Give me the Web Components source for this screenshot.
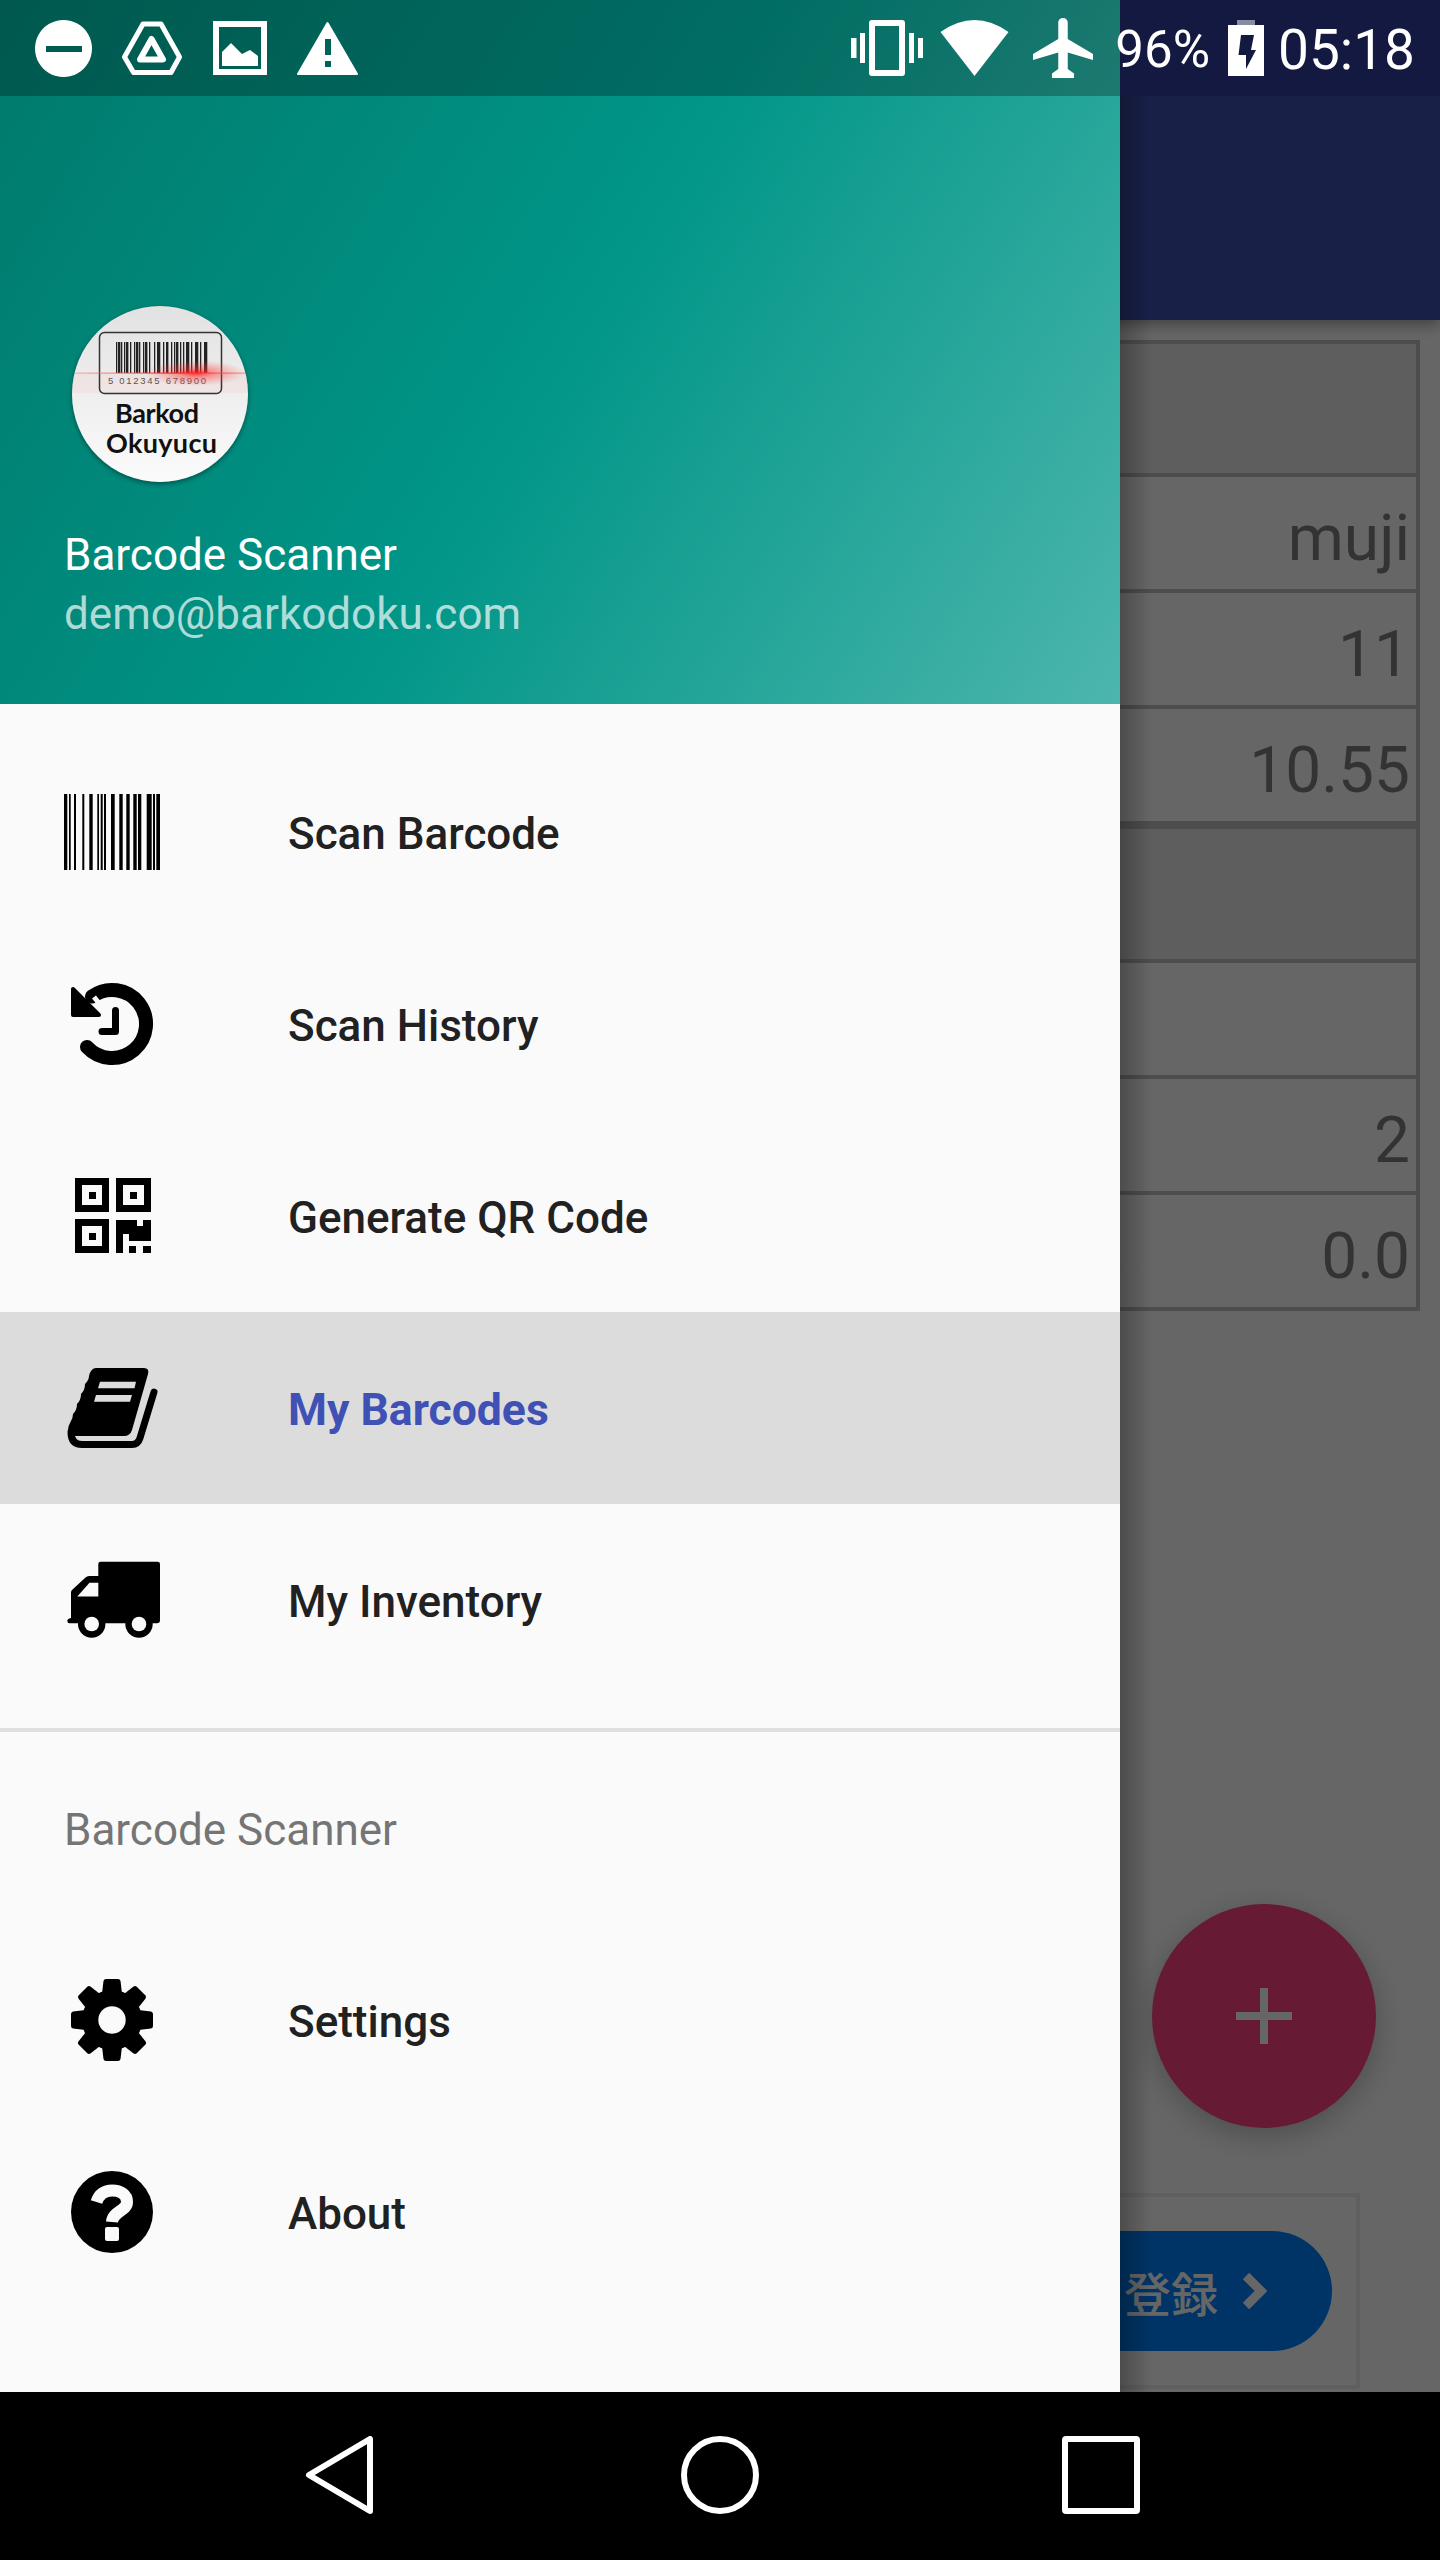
<!DOCTYPE html>
<html>
<head>
<meta charset="utf-8">
<title>Barcode Scanner</title>
<style>
  html, body { margin: 0; background: #000; }
  body { font-family: Roboto, "Noto Sans CJK JP", sans-serif; }
</style>
</head>
<body>
<phone-screen>
  <behind-app></behind-app>
  <nav-drawer>
    <drawer-header slot="header" name="Barcode Scanner" email="demo@barkodoku.com"></drawer-header>
    <drawer-item icon="barcode" label="Scan Barcode"></drawer-item>
    <drawer-item icon="history" label="Scan History"></drawer-item>
    <drawer-item icon="qr" label="Generate QR Code"></drawer-item>
    <drawer-item icon="book" label="My Barcodes" active></drawer-item>
    <drawer-item icon="truck" label="My Inventory"></drawer-item>
    <drawer-item slot="extra" icon="gear" label="Settings"></drawer-item>
    <drawer-item slot="extra" icon="help" label="About"></drawer-item>
  </nav-drawer>
  <status-bar></status-bar>
</phone-screen>

<script>
const BARS = [[0,3.3],[5,1.7],[10,2],[18.3,2],[25.3,3.4],[33.3,1.7],[36.7,2],[40,2],[47,3.7],[55.3,3.4],[62.3,3.4],[69.3,3.4],[74,3.3],[82.7,5],[89,2],[92.3,3.7]];
const LOGO_BARS = [0,2,5,8,10,14,18,20,23,27,29,33,38,41,43,47,50,55,58,60,64,67,70,72,75,79,81,84,88,90];

// all icons on a 96 box, same as the drawer column
const ICONS = {
  barcode: `<g fill="#000">${BARS.map(b => `<rect x="${b[0]}" y="10" width="${b[1]}" height="76"/>`).join('')}</g>`,
  history: `<path d="M28 20.5A34 34 0 1 1 23 71" fill="none" stroke="#000" stroke-width="14" stroke-linecap="round"/>
    <path d="M9 13V39H35Z" fill="#000" stroke="#000" stroke-width="4" stroke-linejoin="round"/>
    <path d="M30 21L42 36" stroke="#fafafa" stroke-width="5"/>
    <path d="M51.5 34.5V55.5H38" fill="none" stroke="#000" stroke-width="7" stroke-linecap="round" stroke-linejoin="round"/>`,
  qr: `<g transform="translate(11 10)" fill="#000" fill-rule="evenodd">
    <path d="M0 0H34V34H0ZM7 7V27H27V7ZM14 14H21V21H14Z"/>
    <path d="M41 0H76V34H41ZM48 7V27H69V7ZM55 14H62V21H55Z"/>
    <path d="M0 41H34V75H0ZM7 48V68H27V48ZM14 55H21V62H14Z"/>
    <path d="M41 42H62V48H68V42H76V63H54V56H48V75H41Z"/>
    <rect x="54" y="68" width="7" height="7"/><rect x="68" y="68" width="8" height="7"/>
  </g>`,
  book: `<path d="M32 8H80Q85.500 8 84 14L68 70Q66 76 60 76H12Q5 76 4 70Q4 66 6.500 62Q9 58 9 54Q13 50 13 44Q17 40 17 34Q21 30 21 24Q25 20 25 16Q27 8 32 8Z" fill="#000"/>
    <path d="M7 72Q7 84.500 18 84.500H68Q74 84.500 76 78L90 32" fill="none" stroke="#000" stroke-width="7" stroke-linecap="round"/>
    <path d="M36 21.700H72L70.500 28.300H34ZM32 35H68L66 41.700H30Z" fill="#dcdcdc"/>`,
  truck: `<path d="M34.300 12Q34.300 9.700 36.500 9.700H93.500Q96 9.700 96 12V68Q96 71.300 93 71.300H5.500Q3.300 71.300 3.300 69Q3.300 66.500 7 66V40.500Q7 38.700 8.500 37.500L21.500 25.500Q23 24 25 24H34.300Z" fill="#000"/>
    <path d="M34.300 30.700H25.500L13.300 44.500H34.300Z" fill="#fafafa"/>
    <circle cx="27.700" cy="72" r="13.700" fill="#000"/><circle cx="27.700" cy="72" r="7.300" fill="#fafafa"/>
    <circle cx="75" cy="72" r="13.700" fill="#000"/><circle cx="75" cy="72" r="7.300" fill="#fafafa"/>`,
  gear: `<g fill="#000"><circle cx="48" cy="48" r="30"/>
    ${[0,45,90,135,180,225,270,315].map(a => `<path transform="rotate(${a} 48 48)" d="M37 30L39.500 9Q40 7 42 7H54Q56 7 56.500 9L59 30Z"/>`).join('')}</g>
    <circle cx="48" cy="48" r="13.700" fill="#fafafa"/>`,
  help: `<circle cx="48" cy="48" r="41" fill="#000"/>
    <path d="M32.500 38C35 30 41 26.500 48 26.500C57 26.500 63 31 63 38C63 47 49 47 48 58" fill="none" stroke="#fafafa" stroke-width="12"/>
    <rect x="41" y="63" width="14" height="14" rx="2" fill="#fafafa"/>`
};

class PhoneScreen extends HTMLElement {
  constructor() {
    super();
    this.attachShadow({ mode: 'open' });
  }

  connectedCallback() {
    this.shadowRoot.innerHTML = `
      <style>
        :host {
          display: grid;
          grid-template-rows: 2392px 168px;
          width: 1440px;
          height: 2560px;
          overflow: hidden;
          background: #000;
        }
        .stack {
          display: grid;
          overflow: hidden;
        }
        ::slotted(*) {
          grid-area: 1 / 1;
        }
      </style>
      <div class="stack"><slot></slot></div>
      <soft-keys></soft-keys>
    `;
  }
}

class StatusBar extends HTMLElement {
  constructor() {
    super();
    this.attachShadow({ mode: 'open' });
  }

  connectedCallback() {
    this.shadowRoot.innerHTML = `
      <style>
        :host {
          display: flex;
          align-items: center;
          align-self: start;
          z-index: 2;
          height: 96px;
          padding-left: 35px;
          gap: 30px;
          color: #fff;
          font-family: Roboto, sans-serif;
          background: linear-gradient(90deg, rgba(0,0,0,.27) 1120px, #131940 1120px);
        }
        svg { display: block; flex: none; fill: #fff; }
        .right { margin-left: auto; display: flex; align-items: center; padding-right: 25px; }
        .pct { font-size: 51px; margin-left: 22px; line-height: 96px; padding-top: 3px; }
        .time { font-size: 55px; margin-left: 14px; line-height: 96px; padding-top: 3px; }
        .plane { margin-left: 24px; }
        .wifi { margin-left: 17px; }
        .batt { margin-left: 18px; }
        .pic { margin-left: 1px; }
      </style>
      <svg width="57" height="57" viewBox="0 0 57 57"><path fill-rule="evenodd" d="M28.500 0a28.500 28.500 0 1 0 .01 0ZM11 26H47V32H11Z"/></svg>
      <svg width="60" height="54" viewBox="0 0 60 54">
        <path d="M21 3H39L57.500 36L49 51.500H11.500L2.500 36Z" fill="none" stroke="#fff" stroke-width="5" stroke-linejoin="round"/>
        <path d="M29.500 18L41 38.500H18Z" fill="none" stroke="#fff" stroke-width="6" stroke-linejoin="round"/>
      </svg>
      <svg class="pic" width="54" height="54" viewBox="0 0 54 54">
        <path fill-rule="evenodd" d="M0 0H54V54H0ZM6 6V48H48V6Z"/>
        <path d="M9 45V31L18 22L29 33L37 29L45 35V45Z"/>
      </svg>
      <svg width="61" height="54" viewBox="0 0 61 54">
        <path fill-rule="evenodd" stroke="#fff" stroke-width="2" stroke-linejoin="round" d="M30.500 2L60 53H1ZM27 17V35H35V17ZM27 39V47H35V39Z"/>
      </svg>
      <div class="right">
        <svg width="72" height="56" viewBox="0 0 72 56">
          <path fill-rule="evenodd" d="M21 0H51Q54 0 54 3V53Q54 56 51 56H21Q18 56 18 53V3Q18 0 21 0ZM24 6V50H48V6Z"/>
          <path d="M0 18H5.500V38H0ZM9 13H14V43H9ZM58 13H63V43H58ZM67 18H72V38H67Z"/>
        </svg>
        <svg class="wifi" width="69" height="56" viewBox="0 0 69 56"><path d="M.5 12Q34.500 -12 68.500 12L34.500 56Z"/></svg>
        <svg class="plane" width="60" height="60" viewBox="2 2 19 20" preserveAspectRatio="none"><path d="M21 16v-2l-8-5V3.500c0-.83-.67-1.500-1.500-1.500S10 2.670 10 3.500V9l-8 5v2l8-2.500V19l-2 1.500V22h7v-1.500L13 19v-5.500l8 2.500z"/></svg>
        <span class="pct">96%</span>
        <svg class="batt" width="36" height="56" viewBox="0 0 36 56">
          <rect x="9" y="0" width="18" height="5" opacity=".5"/>
          <path fill-rule="evenodd" d="M0 5H36V56H0ZM13 15L10.500 35H18V49L28 30H23L26 15Z"/>
        </svg>
        <span class="time">05:18</span>
      </div>
    `;
  }
}

class BehindApp extends HTMLElement {
  constructor() {
    super();
    this.attachShadow({ mode: 'open' });
  }

  connectedCallback() {
    const rows = [
      { h: 129, shade: true },
      { h: 112, text: 'muji' },
      { h: 112, text: '11' },
      { h: 112, text: '10.55', thick: true },
      { h: 130, shade: true },
      { h: 112 },
      { h: 112, text: '2' },
      { h: 112, text: '0.0' }
    ];
    this.shadowRoot.innerHTML = `
      <style>
        :host {
          display: flex;
          flex-direction: column;
          position: relative;
          background: #fff;
          font-family: Roboto, "Noto Sans CJK JP", sans-serif;
        }
        .toolbar {
          height: 320px;
          flex: none;
          background: #3f51b5;
          box-shadow: 0 4px 14px rgba(0,0,0,.4);
          position: relative;
        }
        .table {
          margin: 20px 20px 0;
          border: 4px solid #c0c0c0;
          border-bottom-width: 0;
        }
        .row {
          box-sizing: content-box;
          display: flex;
          align-items: center;
          justify-content: flex-end;
          padding-right: 6px;
          border-bottom: 4px solid #c0c0c0;
          color: #808080;
          font-size: 64px;
          line-height: 1;
        }
        .row span { padding-top: 12px; }
        .row.shade { background: #ebebeb; }
        .row.thick { border-bottom-width: 8px; }
        .bottom {
          margin: auto 80px 3px 0;
          height: 196px;
          box-sizing: border-box;
          border: 4px solid #eee;
          display: flex;
          align-items: center;
          justify-content: flex-end;
          padding: 0 24px 0 0;
        }
        .pill {
          width: 420px;
          height: 120px;
          border-radius: 60px;
          background: #0082ff;
          color: #fff;
          display: flex;
          align-items: center;
          justify-content: flex-end;
          font-size: 47px;
          font-weight: 500;
          box-sizing: border-box;
          padding-right: 64px;
          gap: 24px;
        }
        .pill svg { display: block; }
        .fab {
          position: absolute;
          left: 1152px;
          top: 1904px;
          width: 224px;
          height: 224px;
          border-radius: 50%;
          background: #ff4081;
          box-shadow: 0 8px 30px rgba(0,0,0,.25);
          display: flex;
          align-items: center;
          justify-content: center;
        }
        .scrim {
          position: absolute;
          inset: 0;
          background: linear-gradient(90deg, rgba(0,0,0,.7) 1120px, rgba(0,0,0,.6) 1152px);
        }
      </style>
      <div class="toolbar"></div>
      <div class="table">
        ${rows.map(r => `<div class="row${r.shade ? ' shade' : ''}${r.thick ? ' thick' : ''}" style="height:${r.h}px">${r.text ? `<span>${r.text}</span>` : ''}</div>`).join('')}
      </div>
      <div class="bottom">
        <div class="pill">
          <span>登録</span>
          <svg width="26" height="38" viewBox="0 0 26 38"><path d="M4 4L19 19L4 34" fill="none" stroke="#fff" stroke-width="9"/></svg>
        </div>
      </div>
      <div class="fab">
        <svg width="56" height="56" viewBox="0 0 56 56"><path d="M24 0H32V24H56V32H32V56H24V32H0V24H24Z" fill="#fff"/></svg>
      </div>
      <div class="scrim"></div>
    `;
  }
}

class NavDrawer extends HTMLElement {
  constructor() {
    super();
    this.attachShadow({ mode: 'open' });
  }

  connectedCallback() {
    this.shadowRoot.innerHTML = `
      <style>
        :host {
          display: block;
          z-index: 1;
          width: 1120px;
          background: #fafafa;
          font-family: Roboto, sans-serif;
        }
        .menu { padding: 32px 0; }
        hr {
          margin: 0;
          border: 0;
          height: 4px;
          background: #dfdfdf;
        }
        .title {
          height: 192px;
          box-sizing: border-box;
          display: flex;
          align-items: center;
          padding: 3px 0 0 64px;
          font-size: 44px;
          color: #757575;
        }
      </style>
      <slot name="header"></slot>
      <div class="menu"><slot></slot></div>
      <hr>
      <div class="title">Barcode Scanner</div>
      <slot name="extra"></slot>
    `;
  }
}

class DrawerHeader extends HTMLElement {
  constructor() {
    super();
    this.attachShadow({ mode: 'open' });
  }

  connectedCallback() {
    this.shadowRoot.innerHTML = `
      <style>
        :host {
          display: flex;
          flex-direction: column;
          justify-content: flex-end;
          box-sizing: border-box;
          height: 704px;
          padding: 0 0 60px 64px;
          background: linear-gradient(122deg, #00796b 0%, #009688 50%, #4db6ac 100%);
          font-family: Roboto, sans-serif;
          color: #fff;
        }
        bar-logo { margin: 0 0 44px 8px; }
        .name, .email { font-size: 44px; line-height: 59px; height: 59px; }
        .email { color: rgba(255,255,255,.7); }
      </style>
      <bar-logo></bar-logo>
      <div class="name">${this.getAttribute('name')}</div>
      <div class="email">${this.getAttribute('email')}</div>
    `;
  }
}

class BarLogo extends HTMLElement {
  constructor() {
    super();
    this.attachShadow({ mode: 'open' });
  }

  connectedCallback() {
    this.shadowRoot.innerHTML = `
      <style>
        :host {
          display: block;
          width: 176px;
          height: 176px;
          border-radius: 50%;
          box-shadow: 0 2px 5px rgba(0,0,0,.4);
        }
        svg { display: block; }
      </style>
      <svg width="176" height="176" viewBox="0 0 176 176">
        <defs>
          <linearGradient id="face" x1="0" y1="0" x2="0" y2="1">
            <stop offset="0" stop-color="#e2e2e2"/>
            <stop offset="1" stop-color="#fbfbfb"/>
          </linearGradient>
          <radialGradient id="glow">
            <stop offset="0" stop-color="#ff1a1a" stop-opacity=".9"/>
            <stop offset=".35" stop-color="#ff3030" stop-opacity=".45"/>
            <stop offset="1" stop-color="#ff5050" stop-opacity="0"/>
          </radialGradient>
          <linearGradient id="laser" x1="0" y1="0" x2="1" y2="0">
            <stop offset="0" stop-color="#ff8080" stop-opacity=".5"/>
            <stop offset=".6" stop-color="#ff2020"/>
            <stop offset="1" stop-color="#ff6060" stop-opacity=".6"/>
          </linearGradient>
          <clipPath id="disc"><circle cx="88" cy="88" r="88"/></clipPath>
        </defs>
        <g clip-path="url(#disc)">
          <rect width="176" height="176" fill="url(#face)"/>
          <rect x="0" y="67" width="176" height="20" fill="#ff8080" opacity=".08"/>
          <rect x="27.500" y="26.500" width="122" height="61" rx="5" fill="none" stroke="#333" stroke-width="1.500"/>
          <g fill="#222">${LOGO_BARS.map((x, i) => `<rect x="${44 + x}" y="36" width="${i % 3 === 1 ? 2.4 : 1.3}" height="31"/>`).join('')}</g>
          <text x="36" y="78" font-family="Liberation Sans, sans-serif" font-size="9.500" fill="#555" textLength="98">5 012345 678900</text>
          <ellipse cx="124" cy="67" rx="50" ry="13" fill="url(#glow)"/>
          <rect x="0" y="66.500" width="176" height="1.200" fill="url(#laser)"/>
          <text x="43" y="117" font-family="Lato, sans-serif" font-weight="700" font-size="27" fill="#111" textLength="84">Barkod</text>
          <text x="34" y="147" font-family="Lato, sans-serif" font-weight="700" font-size="27" fill="#111" textLength="111">Okuyucu</text>
        </g>
      </svg>
    `;
  }
}

class DrawerItem extends HTMLElement {
  constructor() {
    super();
    this.attachShadow({ mode: 'open' });
  }

  connectedCallback() {
    const active = this.hasAttribute('active');
    this.shadowRoot.innerHTML = `
      <style>
        :host {
          display: flex;
          align-items: center;
          gap: 128px;
          height: 192px;
          padding-left: 64px;
          background: ${active ? '#dcdcdc' : 'transparent'};
          color: ${active ? '#3f51b5' : '#212121'};
          font-family: Roboto, sans-serif;
          font-weight: ${active ? 700 : 500};
          font-size: ${active ? 44.500 : 44}px;
        }
        svg { display: block; flex: none; }
        span { padding-top: 3px; }
      </style>
      <svg width="96" height="96" viewBox="0 0 96 96">${ICONS[this.getAttribute('icon')]}</svg>
      <span>${this.getAttribute('label')}</span>
    `;
  }
}

class SoftKeys extends HTMLElement {
  constructor() {
    super();
    this.attachShadow({ mode: 'open' });
  }

  connectedCallback() {
    this.shadowRoot.innerHTML = `
      <style>
        :host {
          display: flex;
          justify-content: center;
          align-items: center;
          gap: 303px;
          background: #000;
          padding-bottom: 3px;
          box-sizing: border-box;
        }
        svg { display: block; fill: none; stroke: #fff; stroke-width: 6; }
      </style>
      <svg width="78" height="78" viewBox="0 0 78 78"><path d="M70 3V75L9 39Z" stroke-linejoin="round"/></svg>
      <svg width="78" height="78" viewBox="0 0 78 78"><circle cx="39" cy="39" r="36"/></svg>
      <svg width="78" height="78" viewBox="0 0 78 78"><rect x="3" y="3" width="72" height="72" rx="1"/></svg>
    `;
  }
}

customElements.define('phone-screen', PhoneScreen);
customElements.define('status-bar', StatusBar);
customElements.define('behind-app', BehindApp);
customElements.define('nav-drawer', NavDrawer);
customElements.define('drawer-header', DrawerHeader);
customElements.define('bar-logo', BarLogo);
customElements.define('drawer-item', DrawerItem);
customElements.define('soft-keys', SoftKeys);
</script>
</body>
</html>
